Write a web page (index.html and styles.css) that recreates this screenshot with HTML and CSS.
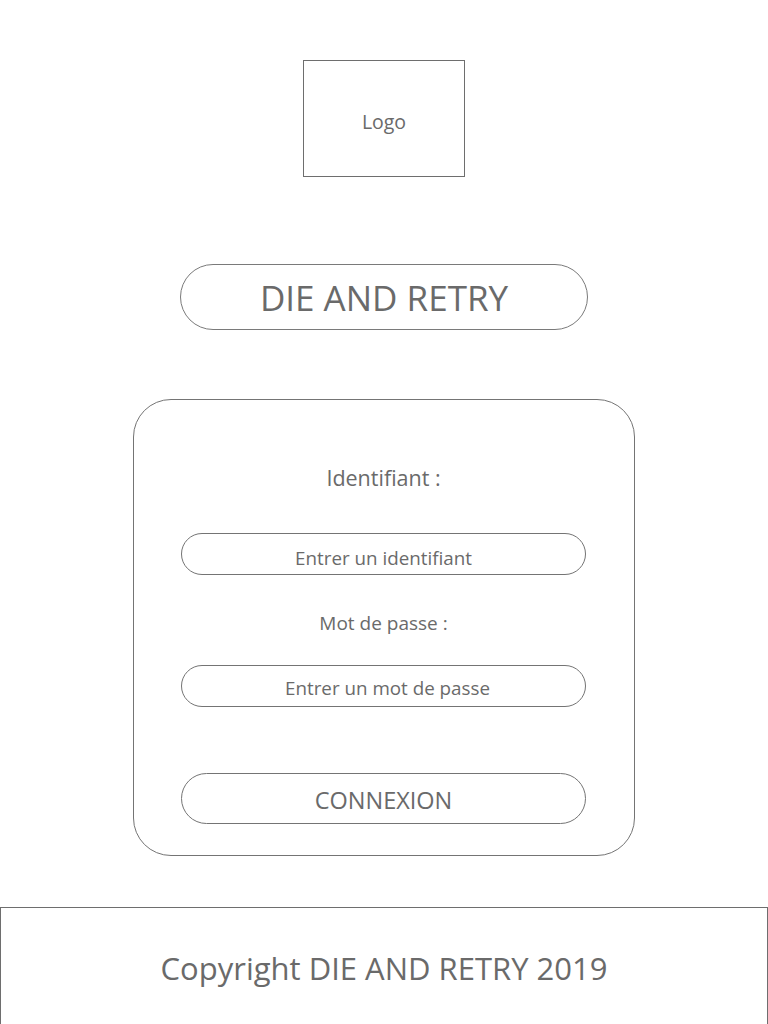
FILE: index.html
```html
<!DOCTYPE html>
<html lang="fr">
<head>
<meta charset="utf-8">
<title>Die and Retry - Connexion</title>
<link rel="stylesheet" href="styles.css">
</head>
<body>
<main class="page">
  <div class="logo">Logo</div>
  <h1 class="title">DIE AND RETRY</h1>
  <form class="card">
    <label class="label label-main" for="ident">Identifiant :</label>
    <input class="field field-1" id="ident" type="text" placeholder="Entrer un identifiant">
    <label class="label label-pass" for="pass">Mot de passe :</label>
    <input class="field field-2" id="pass" type="password" placeholder="Entrer un mot de passe">
    <button class="btn" type="button">CONNEXION</button>
  </form>
</main>
<footer class="footer">Copyright DIE AND RETRY 2019</footer>
</body>
</html>
```

FILE: styles.css
```css
* { box-sizing: border-box; }
html, body { margin: 0; padding: 0; background: #fff; }
body {
  font-family: "Open Sans", "Noto Sans", "Liberation Sans", sans-serif;
  color: #6a6a6a;
}
.page {
  display: flex;
  flex-direction: column;
  align-items: center;
  padding-top: 60px;
}
.logo {
  width: 162px;
  height: 117px;
  border: 1px solid #6e6e6e;
  display: flex;
  align-items: center;
  justify-content: center;
  font-size: 19.5px;
  padding-top: 6px;
}
.title {
  margin: 87px 0 0;
  width: 408px;
  height: 66px;
  border: 1px solid #7a7a7a;
  border-radius: 33px;
  display: flex;
  align-items: center;
  justify-content: center;
  font-weight: 400;
  font-size: 35px;
  padding-top: 0;
  letter-spacing: 0;
}
.card {
  margin-top: 69px;
  width: 502px;
  height: 457px;
  border: 1px solid #747474;
  border-radius: 38px;
  display: flex;
  flex-direction: column;
  align-items: center;
  padding: 63px 48px 0 47px;
}
.label {
  display: block;
  text-align: center;
}
.label-main {
  font-size: 21.5px;
  line-height: 30px;
}
.label-pass {
  font-size: 19px;
  line-height: 26px;
  margin-top: 35px;
}
.field {
  display: block;
  width: 405px;
  height: 42px;
  border: 1px solid #747474;
  border-radius: 21px;
  background: #fff;
  text-align: center;
  font-family: inherit;
  font-size: 18.8px;
  color: #6a6a6a;
  padding: 8px 0 0;
  outline: none;
}
.field::placeholder { color: #6a6a6a; opacity: 1; }
.field-1 { margin-top: 40px; }
.field-2 { margin-top: 29px; padding-left: 8px; padding-top: 4px; }
.btn {
  display: block;
  margin-top: 66px;
  width: 405px;
  height: 51px;
  border: 1px solid #747474;
  border-radius: 26px;
  background: #fff;
  font-family: inherit;
  font-size: 23.5px;
  color: #6a6a6a;
  padding: 2px 0 0;
}
.footer {
  margin-top: 51px;
  height: 122px;
  border: 1px solid #6e6e6e;
  display: flex;
  align-items: center;
  justify-content: center;
  font-size: 31px;
}
```
